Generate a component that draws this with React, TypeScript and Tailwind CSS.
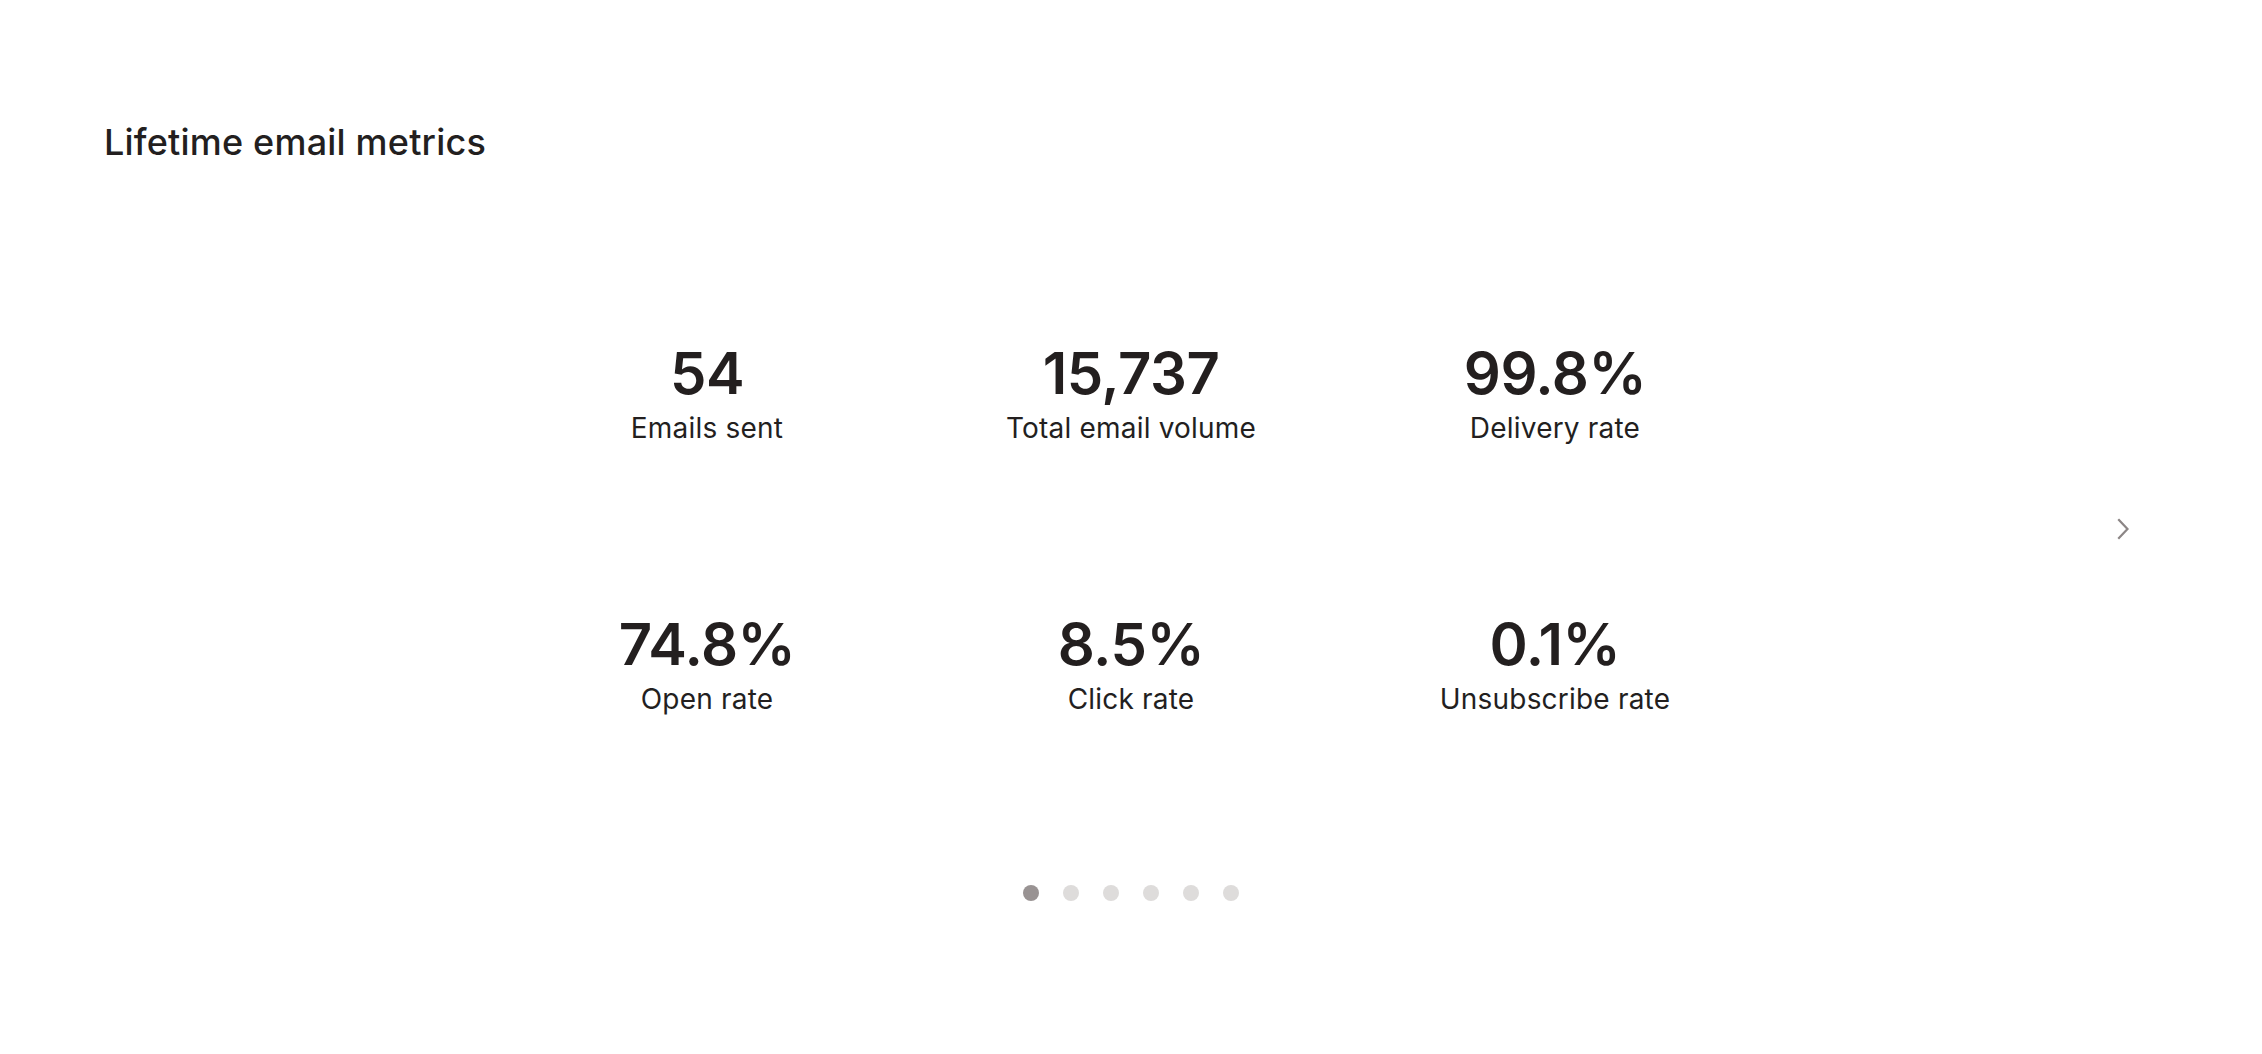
import React from "react";

const metrics = [
  { value: "54", label: "Emails sent" },
  { value: "15,737", label: "Total email volume" },
  { value: "99.8%", label: "Delivery rate" },
  { value: "74.8%", label: "Open rate" },
  { value: "8.5%", label: "Click rate" },
  { value: "0.1%", label: "Unsubscribe rate" },
];

export default function App() {
  return (
    <div
      className="w-full h-[1054px] bg-white text-[#231f1f]"
      style={{ fontFamily: "Inter, 'Noto Sans', sans-serif" }}
    >
      <div className="pt-[122px] pl-[104px]">
        <h2 className="text-[36px] leading-[40px] font-medium tracking-[0.2px]">
          Lifetime email metrics
        </h2>
      </div>

      <div className="mt-[182px] grid grid-cols-[1fr_1272px_1fr] items-center">
        <div />
        <div className="grid grid-cols-3 gap-y-[173px]">
          {metrics.map((m) => (
            <div key={m.label} className="flex flex-col items-center">
              <div className="text-[58px] leading-[58px] font-semibold tracking-[-0.5px]">
                {m.value}
              </div>
              <div className="mt-[12px] text-[28px] leading-[28px] font-normal tracking-[0.2px]">
                {m.label}
              </div>
            </div>
          ))}
        </div>
        <div className="flex justify-end pr-[131px]">
          <button className="flex items-center justify-center w-[16px] h-[24px]">
            <svg width="14" height="22" viewBox="0 0 14 22" fill="none">
              <polyline
                points="3,2 11.5,11 3,20"
                stroke="#8c8686"
                strokeWidth="2.2"
                strokeLinecap="square"
                strokeLinejoin="miter"
              />
            </svg>
          </button>
        </div>
      </div>

      <div className="mt-[172px] flex justify-center gap-[24px]">
        <span className="w-[16px] h-[16px] rounded-full bg-[#999393]" />
        <span className="w-[16px] h-[16px] rounded-full bg-[#dedcdb]" />
        <span className="w-[16px] h-[16px] rounded-full bg-[#dedcdb]" />
        <span className="w-[16px] h-[16px] rounded-full bg-[#dedcdb]" />
        <span className="w-[16px] h-[16px] rounded-full bg-[#dedcdb]" />
        <span className="w-[16px] h-[16px] rounded-full bg-[#dedcdb]" />
      </div>
    </div>
  );
}
